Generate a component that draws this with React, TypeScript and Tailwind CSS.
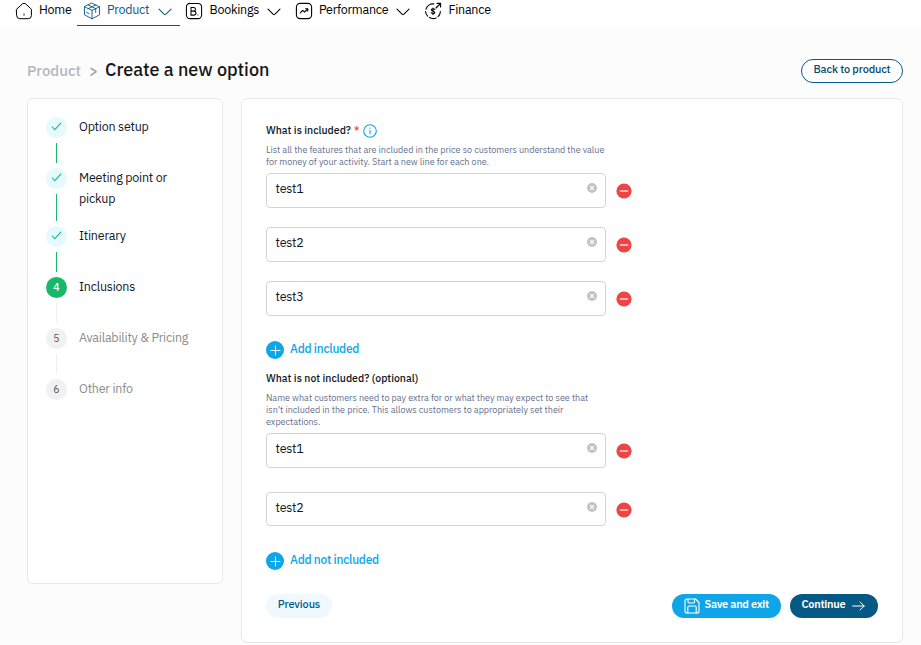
import React from "react";

type IconProps = { className?: string };

const line = {
  fill: "none",
  stroke: "currentColor",
  strokeLinecap: "round" as const,
  strokeLinejoin: "round" as const,
};

function HomeIcon() {
  return (
    <svg width="18" height="18" viewBox="0 0 18 18" {...line} strokeWidth="1">
      <path d="M1.6 7.2 7.5 1.8q1.5-1.1 3 0l5.9 5.4v6.3a3.2 3.2 0 0 1-3.2 3.2H4.8a3.2 3.2 0 0 1-3.2-3.2z" />
      <path d="M9 11.7v1.6" strokeWidth=".8" />
    </svg>
  );
}

function BoxIcon() {
  return (
    <svg width="18" height="18" viewBox="0 0 18 18" {...line} strokeWidth="0.9">
      <path d="M9 1.2 16.5 4.8v8L9 16.8 1.5 12.8v-8z" />
      <path d="M1.5 4.8 9 8.4l7.5-3.6M9 8.4v8.4M5.2 3l7.5 3.6v3.9M12.8 3 5.3 6.6M3.6 10.4l2.4 1.2" />
    </svg>
  );
}

function BookingsIcon() {
  return (
    <svg width="18" height="18" viewBox="0 0 18 18" {...line} strokeWidth="1.05">
      <rect x="1.4" y="1.4" width="15.2" height="15.2" rx="3.6" />
      <path d="M6 5.4h2.6a1.8 1.8 0 0 1 0 3.7H6zM6 9.1h3a2 2 0 0 1 0 4H6z" />
      <path d="M12.9 12.9v.2" strokeWidth=".8" />
    </svg>
  );
}

function PerformanceIcon() {
  return (
    <svg width="18" height="18" viewBox="0 0 18 18" {...line} strokeWidth="1.1">
      <rect x="1.4" y="1.4" width="15.2" height="15.2" rx="3.8" />
      <path d="m5.3 10.8 2.3-2.4 2 1.6 3-2.9M10.6 6.8h2.2V9" />
    </svg>
  );
}

function FinanceIcon() {
  return (
    <svg width="18" height="18" viewBox="0 0 18 18" {...line} strokeWidth="1.1">
      <path d="M9.7 1.9A7.3 7.3 0 0 0 2 7.1M1.5 9.5a7.4 7.4 0 0 0 2.2 4.7M5.5 15.6a7.4 7.4 0 0 0 6.6.3M14 14.7a7.4 7.4 0 0 0 2.4-5.2" />
      <path d="m12 6 4.5-4.5M13 1.4h3.6V5" />
      <path d="M10.8 7.5C10.1 6.5 7.4 6.5 7.4 8.1c0 1.5 3.4.8 3.4 2.3 0 1.5-2.9 1.5-3.6.3M9 6v6.6" />
    </svg>
  );
}

function Chevron() {
  return (
    <svg width="14" height="8" viewBox="0 0 14 8" {...line} strokeWidth="1.05">
      <path d="M1 1.1 6.3 6.4q.7.6 1.4 0L13 1.1" />
    </svg>
  );
}

function Check() {
  return (
    <svg width="11" height="9" viewBox="0 0 11 9" {...line} strokeWidth="1.05" className="mb-[2px]">
      <path d="m1.2 5 2.6 2.7L9.8 1.1" />
    </svg>
  );
}

function InfoIcon({ className }: IconProps) {
  return (
    <svg width="14" height="14" viewBox="0 0 14 14" {...line} strokeWidth="1.1" className={className}>
      <circle cx="7" cy="7" r="6.3" />
      <path d="M7 6.4v3.4M7 4v.2" />
    </svg>
  );
}

function ClearIcon() {
  return (
    <svg width="10" height="10" viewBox="0 0 10 10" className="mb-[5px]">
      <circle cx="5" cy="5" r="5" fill="#c4c4c4" />
      <path d="m3.2 3.2 3.6 3.6m0-3.6L3.2 6.8" stroke="#fff" strokeWidth="1.2" />
    </svg>
  );
}

function RemoveIcon() {
  return (
    <svg width="16" height="16" viewBox="0 0 16 16" className="mt-px">
      <circle cx="8" cy="8" r="7.6" fill="#ef4444" />
      <path d="M4.6 8h6.8" stroke="#fbb6b6" strokeWidth="1.9" strokeLinecap="round" />
    </svg>
  );
}

function PlusIcon() {
  return (
    <svg width="18" height="18" viewBox="0 0 18 18" className="shrink-0">
      <circle cx="9" cy="9" r="9" fill="#0ea5e9" />
      <path d="M9.5 5v9M5 9.5h9" stroke="#fff" strokeWidth="1" strokeLinecap="round" />
    </svg>
  );
}

function SaveIcon() {
  return (
    <svg width="16" height="16" viewBox="0 0 16 16" {...line} strokeWidth="1.1">
      <path d="M3 1h8.5L15 4.5V13a2 2 0 0 1-2 2H3a2 2 0 0 1-2-2V3a2 2 0 0 1 2-2z" />
      <path d="M4 1v2.8q0 1.2 1.2 1.2h4.1q1.2 0 1.2-1.2V1M3.8 15V9.3q0-1.3 1.3-1.3h5.8q1.3 0 1.3 1.3V15" />
    </svg>
  );
}

function ArrowIcon() {
  return (
    <svg width="13" height="10" viewBox="0 0 13 10" {...line} strokeWidth="1">
      <path d="M.7 5h11.5M8 1l4.2 4L8 9" />
    </svg>
  );
}

function Field({ value, className, textClass = "mb-[6px]" }: { value: string; className: string; textClass?: string }) {
  return (
    <div className="flex items-center">
      <div className={"flex w-[340px] items-center justify-between rounded-[4px] border border-[#d4d4d4] bg-white pr-[8px] pl-[8.5px] " + className}>
        <span className={"text-[12.5px] leading-5 tracking-[-0.2px] " + textClass}>{value}</span>
        <ClearIcon />
      </div>
      <button className="ml-[10px]"><RemoveIcon /></button>
    </div>
  );
}

type Step = { text: string; height: string; state: "done" | "current" | "todo" };

const steps: Step[] = [
  { text: "Option setup", height: "h-[51px]", state: "done" },
  { text: "Meeting point or pickup", height: "h-[58px]", state: "done" },
  { text: "Itinerary", height: "h-[51px]", state: "done" },
  { text: "Inclusions", height: "h-[51px]", state: "current" },
  { text: "Availability & Pricing", height: "h-[51px]", state: "todo" },
  { text: "Other info", height: "h-[21px]", state: "todo" },
];

const circleStyle = {
  done: "bg-[#e5f9ff] text-[#18b96d]",
  current: "bg-[#16b86a] text-white font-medium",
  todo: "bg-[#f1f1f1] text-[#555]",
};

function Sidebar() {
  return (
    <aside className="h-[486px] w-[196px] shrink-0 rounded-md border border-[#e8e8e8] bg-white pt-[18px] pl-[18px]">
      {steps.map((step, i) => (
        <div key={step.text} className={"flex gap-[12px] " + step.height}>
          <div className="flex w-[21px] flex-col items-center">
            <div className={"flex size-[21px] shrink-0 items-center justify-center rounded-full text-[10.5px] " + circleStyle[step.state]}>
              {step.state === "done" ? <Check /> : <span className="leading-none">{i + 1}</span>}
            </div>
            {i < steps.length - 1 && (
              <div className={"my-[5px] w-px flex-1 " + (step.state === "done" ? "bg-[#16b86a]" : "bg-[#eeeeee]")} />
            )}
          </div>
          <div className={"-mt-px w-[118px] text-[12.5px] leading-[21px] tracking-[-0.22px]" + (step.state === "todo" ? " text-[#8c8c8c]" : "")}>
            {step.text}
          </div>
        </div>
      ))}
    </aside>
  );
}

export default function App() {
  return (
    <div className="h-[645px] w-[921px] overflow-hidden bg-[#fcfcfc] font-['IBM_Plex_Sans',Roboto,sans-serif] text-[#111827]">
      <nav className="flex h-[26px] bg-white pl-[15px] text-[12.5px] leading-[20px] tracking-[-0.26px] whitespace-nowrap text-black">
        <div className="flex w-[62px] gap-[6px] pt-[2px]">
          <HomeIcon /><span className="-mt-[3px]">Home</span>
        </div>
        <div className="flex w-[103px] border-b border-[#075985] pt-[2px] pl-[6px] text-[#075985]">
          <BoxIcon /><span className="-mt-[3px] ml-[6px] w-[51px]">Product</span>
          <div className="pt-[6px]"><Chevron /></div>
        </div>
        <div className="flex w-[110px] pt-[2px] pl-[5px]">
          <BookingsIcon /><span className="-mt-[3px] ml-[6.5px] w-[57.5px]">Bookings</span>
          <div className="pt-[6px]"><Chevron /></div>
        </div>
        <div className="flex w-[129px] pt-[2px] pl-[5px]">
          <PerformanceIcon /><span className="-mt-[3px] ml-[6px] w-[77px]">Performance</span>
          <div className="pt-[6px]"><Chevron /></div>
        </div>
        <div className="flex pt-[2px] pl-[5px]">
          <FinanceIcon /><span className="-mt-[3px] ml-[6.5px]">Finance</span>
        </div>
      </nav>

      <header className="flex h-[72px] items-start justify-between pr-[18px] pl-[27px]">
        <h1 className="flex pt-[32px] leading-6 font-medium whitespace-nowrap">
          <span className="w-[62px] pt-px text-[15px] text-[#b2b7c1]">Product</span>
          <span className="w-[16px] pt-px text-[15px] text-[#999fa9]">&gt;</span>
          <span className="text-[18px] text-[#171717]">Create a new option</span>
        </h1>
        <button className="mt-[33px] h-[24px] w-[102px] rounded-full border border-[#075985] bg-white pb-[3px] text-[11px] leading-none font-medium tracking-[-0.18px] text-[#0c4a6e]">
          Back to product
        </button>
      </header>

      <div className="flex gap-[18px] pl-[27px]">
        <Sidebar />
        <main className="flex h-[545px] w-[662px] shrink-0 flex-col rounded-md border border-[#e8e8e8] bg-white px-[24px] pt-[23px]">
          <div className="flex h-[17px] items-center text-[10.5px] font-medium">
            <span>What is included?</span>
            <span className="ml-[3px] text-[#ef4444]">*</span>
            <InfoIcon className="ml-[4px] text-[#0ea5e9]" />
          </div>
          <p className="mt-[5px] h-[27px] text-[9px] leading-[12px] whitespace-nowrap text-[#64708b]">
            List all the features that are included in the price so customers understand the value<br />
            for money of your activity. Start a new line for each one.
          </p>
          <div className="mt-[2px] flex flex-col gap-[19px]">
            <Field value="test1" className="h-[35px]" />
            <Field value="test2" className="h-[35px]" />
            <Field value="test3" className="h-[35px]" />
          </div>
          <button className="mt-[25px] flex h-[18px] items-center gap-[6px] text-[12px] font-medium tracking-[-0.28px] text-[#0ea5e9]">
            <PlusIcon /><span className="mb-[3px] leading-4">Add included</span>
          </button>
          <div className="mt-[11px] h-[17px] text-[10.5px] leading-[16px] font-medium">What is not included? (optional)</div>
          <p className="mt-[5px] h-[42px] text-[9px] leading-[12px] whitespace-nowrap text-[#64708b]">
            Name what customers need to pay extra for or what they may expect to see that<br />
            isn’t included in the price. This allows customers to appropriately set their<br />
            expectations.
          </p>
          <div className="-mt-px flex flex-col gap-[24px]">
            <Field value="test1" className="h-[35px]" />
            <Field value="test2" className="h-[34px]" textClass="mb-[4px]" />
          </div>
          <button className="mt-[26px] flex h-[18px] items-center gap-[6px] text-[12px] font-medium tracking-[-0.28px] text-[#0ea5e9]">
            <PlusIcon /><span className="mb-[3px] leading-4">Add not included</span>
          </button>
          <div className="mt-[24px] flex text-[11px] leading-none font-medium tracking-[-0.15px]">
            <button className="h-[24px] w-[66px] rounded-full bg-[#f0f9ff] pb-[3px] text-[#075985]">Previous</button>
            <button className="ml-auto flex h-[24px] w-[109px] items-center rounded-full bg-[#0ea5e9] pl-[11.5px] font-semibold tracking-[-0.28px] whitespace-nowrap text-white">
              <SaveIcon /><span className="mb-[3px] ml-[5px]">Save and exit</span>
            </button>
            <button className="ml-[9px] flex h-[24px] w-[88px] items-center rounded-full bg-[#075985] pl-[11.5px] font-semibold tracking-[-0.25px] text-white">
              <span className="mb-[3px] w-[50.5px] text-left">Continue</span><ArrowIcon />
            </button>
          </div>
        </main>
      </div>
    </div>
  );
}
